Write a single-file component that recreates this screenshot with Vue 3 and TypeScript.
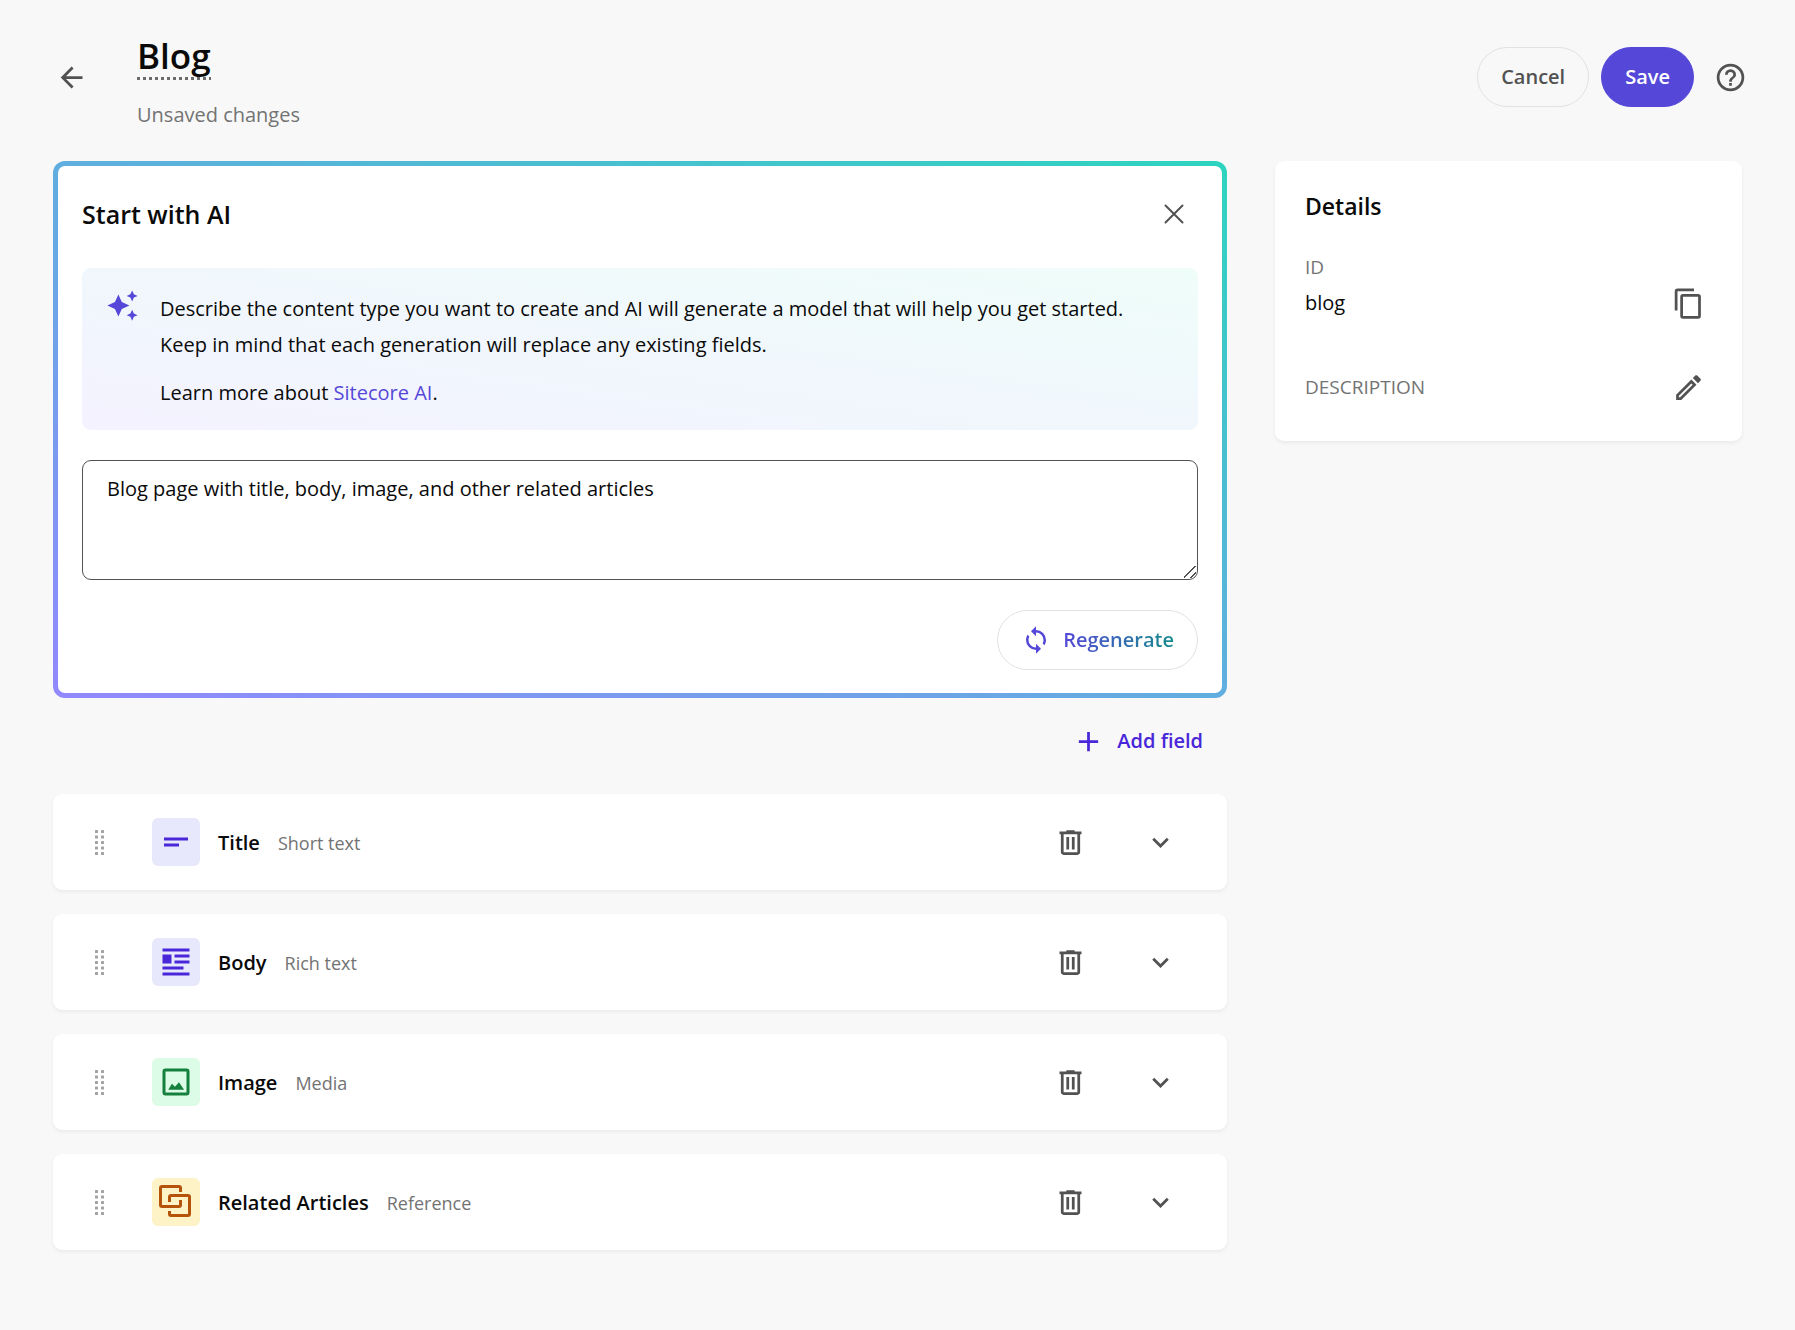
<script setup lang="ts">
import { ref } from 'vue'

type IconKind = 'short' | 'rich' | 'media' | 'reference'

interface Field {
  name: string
  type: string
  kind: IconKind
}

const prompt = ref('Blog page with title, body, image, and other related articles')

const fields = ref<Field[]>([
  { name: 'Title', type: 'Short text', kind: 'short' },
  { name: 'Body', type: 'Rich text', kind: 'rich' },
  { name: 'Image', type: 'Media', kind: 'media' },
  { name: 'Related Articles', type: 'Reference', kind: 'reference' },
])

const gripDots = [0, 1, 2, 3, 4].flatMap((row) => [0, 6].map((x) => ({ x, y: row * 5.5 })))
</script>

<template>
  <div class="page">
    <header class="header">
      <button class="icon-button back" type="button" aria-label="Back">
        <svg class="icon" viewBox="0 0 24 24"><path d="M20,11V13H8L13.5,18.5L12.08,19.92L4.16,12L12.08,4.08L13.5,5.5L8,11H20Z" /></svg>
      </button>
      <div class="heading">
        <h1>Blog</h1>
        <p>Unsaved changes</p>
      </div>
      <div class="actions">
        <button class="pill" type="button">Cancel</button>
        <button class="pill primary" type="button">Save</button>
        <button class="icon-button help" type="button" aria-label="Help">
          <svg class="icon" viewBox="0 0 24 24"><path d="M11,18H13V16H11V18M12,2A10,10 0 0,0 2,12A10,10 0 0,0 12,22A10,10 0 0,0 22,12A10,10 0 0,0 12,2M12,20C7.59,20 4,16.41 4,12C4,7.59 7.59,4 12,4C16.41,4 20,7.59 20,12C20,16.41 16.41,20 12,20M12,6A4,4 0 0,0 8,10H10A2,2 0 0,1 12,8A2,2 0 0,1 14,10C14,12 11,11.75 11,15H13C13,12.75 16,12.5 16,10A4,4 0 0,0 12,6Z" /></svg>
        </button>
      </div>
    </header>

    <div class="columns">
      <main>
        <section class="ai-card">
          <div class="ai-head">
            <h2>Start with AI</h2>
            <button class="icon-button close" type="button" aria-label="Close">
              <svg class="icon-small" viewBox="0 0 20 20"><path d="M1.5 1.5l17 17M18.5 1.5l-17 17" fill="none" stroke="currentColor" stroke-width="2" stroke-linecap="round" /></svg>
            </button>
          </div>

          <div class="banner">
            <svg class="icon spark" viewBox="0 0 24 24"><path d="M19,1L17.74,3.75L15,5L17.74,6.26L19,9L20.25,6.26L23,5L20.25,3.75M9,4L6.5,9.5L1,12L6.5,14.5L9,20L11.5,14.5L17,12L11.5,9.5M19,15L17.74,17.74L15,19L17.74,20.25L19,23L20.25,20.25L23,19L20.25,17.74" /></svg>
            <div class="banner-text">
              <p>
                Describe the content type you want to create and AI will generate a model that will help you get started.<br />
                Keep in mind that each generation will replace any existing fields.
              </p>
              <p>Learn more about <a href="#sitecore-ai">Sitecore AI</a>.</p>
            </div>
          </div>

          <textarea v-model="prompt" aria-label="Content type description"></textarea>

          <div class="ai-foot">
            <button class="pill regenerate" type="button">
              <svg class="icon-sync" viewBox="0 0 24 24"><path d="M12,18A6,6 0 0,1 6,12C6,11 6.25,10.03 6.7,9.2L5.24,7.74C4.46,8.97 4,10.43 4,12A8,8 0 0,0 12,20V23L16,19L12,15M12,4V1L8,5L12,9V6A6,6 0 0,1 18,12C18,13 17.75,13.97 17.3,14.8L18.76,16.26C19.54,15.03 20,13.57 20,12A8,8 0 0,0 12,4Z" /></svg>
              <span>Regenerate</span>
            </button>
          </div>
        </section>

        <div class="toolbar">
          <button class="add" type="button">
            <svg class="icon" viewBox="0 0 24 24"><path d="M19,13H13V19H11V13H5V11H11V5H13V11H19V13Z" /></svg>
            Add field
          </button>
        </div>

        <ul class="fields">
          <li v-for="field in fields" :key="field.name" class="field">
            <svg class="grip" viewBox="0 0 9 25">
              <rect v-for="(dot, i) in gripDots" :key="i" :x="dot.x" :y="dot.y" width="3" height="3" rx="0.5" />
            </svg>
            <span class="tile" :class="field.kind">
              <svg viewBox="0 0 48 48">
                <g v-if="field.kind === 'short'" transform="translate(6 6) scale(1.5)">
                  <path d="M4,9H20V11H4V9M4,13H14V15H4V13Z" />
                </g>
                <g v-else-if="field.kind === 'rich'" transform="translate(6 6) scale(1.5)">
                  <path d="M3,3H21V5H3V3M3,7H9V13H3V7M11,7H21V9H11V7M11,11H21V13H11V11M3,15H17V17H3V15M3,19H21V21H3V19Z" />
                </g>
                <g v-else-if="field.kind === 'media'" transform="translate(6 6) scale(1.5)">
                  <path d="M19,19H5V5H19V19M19,3H5A2,2 0 0,0 3,5V19A2,2 0 0,0 5,21H19A2,2 0 0,0 21,19V5A2,2 0 0,0 19,3M6.8,17.2H17.4L14,12.2L11.3,15.2L9.3,13.2Z" />
                </g>
                <path
                  v-else
                  d="M28.5 14V10a1.5 1.5 0 0 0-1.5-1.5H10A1.5 1.5 0 0 0 8.5 10V27a1.5 1.5 0 0 0 1.5 1.5H27a1.5 1.5 0 0 0 1.5-1.5V22M17.5 24V19a1.5 1.5 0 0 1 1.5-1.5H36a1.5 1.5 0 0 1 1.5 1.5V36a1.5 1.5 0 0 1-1.5 1.5H19a1.5 1.5 0 0 1-1.5-1.5V33"
                  fill="none"
                  stroke="currentColor"
                  stroke-width="3"
                />
              </svg>
            </span>
            <div class="label">
              <strong>{{ field.name }}</strong>
              <span>{{ field.type }}</span>
            </div>
            <button class="icon-button" type="button" :aria-label="`Delete ${field.name}`">
              <svg class="icon" viewBox="0 0 24 24"><path fill-rule="evenodd" d="M7 21q-.825 0-1.412-.587Q5 19.825 5 19V6H4V4h5V3h6v1h5v2h-1v13q0 .825-.587 1.413Q17.825 21 17 21ZM17 6H7v13h10ZM9 17h2V8H9Zm4 0h2V8h-2Z" /></svg>
            </button>
            <button class="icon-button" type="button" :aria-label="`Expand ${field.name}`">
              <svg class="icon" viewBox="0 0 24 24"><path d="M7.41,8.58L12,13.17L16.59,8.58L18,10L12,16L6,10L7.41,8.58Z" /></svg>
            </button>
          </li>
        </ul>
      </main>

      <aside class="details">
        <h2>Details</h2>
        <dl>
          <div class="entry">
            <div>
              <dt>ID</dt>
              <dd>blog</dd>
            </div>
            <button class="icon-button" type="button" aria-label="Copy ID">
              <svg class="icon" viewBox="0 0 24 24"><path d="M19,21H8V7H19M19,5H8A2,2 0 0,0 6,7V21A2,2 0 0,0 8,23H19A2,2 0 0,0 21,21V7A2,2 0 0,0 19,5M16,1H4A2,2 0 0,0 2,3V17H4V3H16V1Z" /></svg>
            </button>
          </div>
          <div class="entry">
            <dt>DESCRIPTION</dt>
            <button class="icon-button" type="button" aria-label="Edit description">
              <svg class="icon" viewBox="0 0 24 24"><path d="M14.06,9L15,9.94L5.92,19H5V18.08L14.06,9M17.66,3C17.41,3 17.15,3.1 16.96,3.29L15.13,5.12L18.88,8.87L20.71,7.04C21.1,6.65 21.1,6 20.71,5.63L18.37,3.29C18.17,3.09 17.92,3 17.66,3M14.06,6.19L3,17.25V21H6.75L17.81,9.94L14.06,6.19Z" /></svg>
            </button>
          </div>
        </dl>
      </aside>
    </div>
  </div>
</template>

<style>
body {
  margin: 0;
  background: #f8f8f8;
}
</style>

<style scoped>
.page {
  box-sizing: border-box;
  min-height: 100vh;
  padding: 29px 53px 48px;
  background: #f8f8f8;
  color: #0a0a0a;
  font-family: 'Segoe UI', 'Open Sans', 'Noto Sans', sans-serif;
  font-size: 20px;
  line-height: 30px;
}

h1,
h2,
p,
ul,
dl,
dd {
  margin: 0;
  padding: 0;
}

button,
textarea {
  font: inherit;
}

button {
  padding: 0;
  border: 0;
  background: none;
  cursor: pointer;
}

svg {
  display: block;
  fill: currentColor;
}

.icon {
  flex: none;
  width: 33px;
  height: 33px;
}

.icon-small {
  width: 20px;
  height: 20px;
}

.icon-sync {
  width: 30px;
  height: 30px;
}

.icon-button {
  display: flex;
  flex: none;
  align-items: center;
  justify-content: center;
  width: 48px;
  height: 48px;
  color: #525252;
}

.header {
  display: flex;
  align-items: flex-start;
  margin-bottom: 31px;
}

.back,
.help {
  width: 36px;
  height: 60px;
}

.back {
  margin: 18px 48px 0 0;
}

.heading {
  flex: 1;
}

h1 {
  width: fit-content;
  margin-bottom: 20px;
  padding-top: 3px;
  background: repeating-linear-gradient(to right, #6b6b6b 0 3px, transparent 3px 6px) left bottom / 100% 3px no-repeat;
  font-size: 35px;
  font-weight: 600;
  line-height: 48px;
}

.heading p {
  color: #737373;
}

.actions {
  display: flex;
  align-items: center;
  gap: 12px;
  margin-top: 18px;
}

.help {
  margin: 0 -6px 0 6px;
}

.pill {
  display: flex;
  box-sizing: border-box;
  align-items: center;
  height: 60px;
  padding: 0 23px;
  border: 1px solid #e2e2e2;
  border-radius: 30px;
  color: #525252;
  font-weight: 600;
}

.primary {
  border-color: #5548d9;
  background: #5548d9;
  color: #fff;
}

.columns {
  display: grid;
  grid-template-columns: minmax(0, 1fr) 467px;
  align-items: start;
  gap: 48px;
}

.ai-card {
  padding: 24px 24px 23px;
  border: 5px solid transparent;
  border-radius: 12px;
  background:
    linear-gradient(#fff, #fff) padding-box,
    linear-gradient(to top right, #9288ff, #2dd4bf) border-box;
}

.ai-head {
  display: flex;
  align-items: center;
  justify-content: space-between;
  margin-bottom: 30px;
}

h2 {
  font-size: 23px;
  font-weight: 600;
  line-height: 36px;
}

.ai-head h2 {
  font-size: 25px;
}

.banner {
  display: flex;
  gap: 21px;
  padding: 21px 24px 19px;
  border-radius: 9px;
  background: linear-gradient(to top right, #f4f2ff, #f1f6fd 40%, #effdf9);
  line-height: 36px;
}

.banner-text {
  padding-top: 2px;
}

.banner p + p {
  margin-top: 12px;
}

.spark,
.banner a {
  color: #5548d9;
}

.banner a {
  text-decoration: none;
}

textarea {
  display: block;
  box-sizing: border-box;
  width: 100%;
  height: 120px;
  margin: 30px 0;
  padding: 13px 24px;
  border: 1px solid #525252;
  border-radius: 9px;
  outline: 0;
  background: #fff;
  color: #0a0a0a;
  resize: vertical;
}

textarea::-webkit-resizer {
  background: linear-gradient(135deg, transparent 45%, #525252 45% 54%, transparent 54% 72%, #525252 72% 81%, transparent 81%) 2px 2px / 12px 12px no-repeat;
}

.ai-foot,
.toolbar {
  display: flex;
  justify-content: flex-end;
}

.regenerate {
  gap: 12px;
  color: #5548d9;
}

.regenerate span {
  background: linear-gradient(to right, #5548d9, #158c8c);
  background-clip: text;
  color: transparent;
}

.toolbar {
  padding: 13px 24px 23px;
}

.add {
  display: flex;
  align-items: center;
  gap: 12px;
  height: 60px;
  color: #4a26d9;
  font-weight: 600;
}

.fields {
  display: flex;
  flex-direction: column;
  gap: 24px;
  list-style: none;
}

.field,
.details {
  border-radius: 9px;
  background: #fff;
  box-shadow: 0 2px 4px rgba(0, 0, 0, 0.06);
}

.field {
  display: flex;
  box-sizing: border-box;
  align-items: center;
  height: 96px;
  padding: 0 43px 0 42px;
}

.field .icon-button + .icon-button {
  margin-left: 42px;
}

.grip {
  width: 9px;
  height: 25px;
  margin-right: 48px;
  color: #a3a3a3;
}

.tile {
  width: 48px;
  height: 48px;
  margin-right: 18px;
  border-radius: 6px;
  background: #e8e8fd;
  color: #4a26d9;
}

.tile.media {
  background: #dcfce7;
  color: #15803d;
}

.tile.reference {
  background: #fef3c7;
  color: #b45309;
}

.label {
  display: flex;
  flex: 1;
  align-items: baseline;
  gap: 18px;
  padding-top: 2px;
}

strong {
  font-weight: 600;
}

.label span {
  color: #737373;
  font-size: 18px;
}

dt {
  color: #737373;
  font-size: 19px;
}

.details {
  padding: 27px 30px 36px;
}

.details h2 {
  margin-bottom: 25px;
}

.entry {
  display: flex;
  align-items: flex-end;
  justify-content: space-between;
}

.entry .icon-button {
  height: 36px;
}

.entry + .entry {
  margin-top: 48px;
}

dt,
dd {
  line-height: 36px;
}
</style>
